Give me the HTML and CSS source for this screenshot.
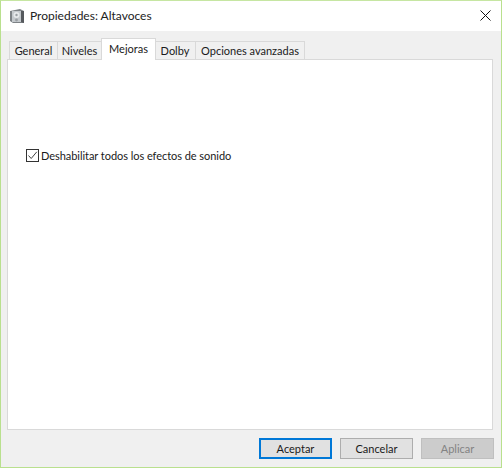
FILE: index.html
```html
<!DOCTYPE html>
<html>
<head>
    <meta charset="UTF-8">
    <title>Propiedades: Altavoces</title>
    <link rel="stylesheet" href="styles.css">
</head>
<body>
    <div class="window">
        <div class="titlebar">
            <svg class="app-icon" width="16" height="16" viewBox="0 0 16 16">
                <path d="M1 3 L11 1 L15 3 L15 15 L4 15 L1 13 Z" fill="#7d8286"/>
                <path d="M3 3 L12 3 L12 14 L3 14 Z" fill="#c4c9cd"/>
                <circle cx="7.5" cy="7" r="3" fill="#e6e9eb"/>
                <circle cx="7.5" cy="7" r="1.2" fill="#9a9fa3"/>
                <circle cx="7.5" cy="12" r="1.4" fill="#9a9fa3"/>
                <path d="M12 3 L15 3 L15 15 L12 14 Z" fill="#55595d"/>
            </svg>
            <div class="title">Propiedades: Altavoces</div>
            <svg class="close" width="11" height="11" viewBox="0 0 11 11">
                <path d="M0.5 0.5 L10.5 10.5 M10.5 0.5 L0.5 10.5" stroke="#111" stroke-width="1" fill="none"/>
            </svg>
        </div>
        <div class="content">
            <div class="tabs">
                <div class="tab tab-general">General</div>
                <div class="tab tab-niveles">Niveles</div>
                <div class="tab tab-mejoras active">Mejoras</div>
                <div class="tab tab-dolby">Dolby</div>
                <div class="tab tab-opciones">Opciones avanzadas</div>
            </div>
            <div class="panel">
                <label class="check-row">
                    <span class="checkbox">
                        <svg width="11" height="11" viewBox="0 0 11 11">
                            <path d="M1.5 5.5 L4.2 8.5 L9.8 1.8" stroke="#444" stroke-width="1" fill="none"/>
                        </svg>
                    </span>
                    <span class="check-label">Deshabilitar todos los efectos de sonido</span>
                </label>
            </div>
            <div class="buttons">
                <button class="btn btn-default">Aceptar</button>
                <button class="btn">Cancelar</button>
                <button class="btn btn-disabled">Aplicar</button>
            </div>
        </div>
    </div>
</body>
</html>
```

FILE: styles.css
```css
html, body {
    margin: 0;
    padding: 0;
}
body {
    width: 502px;
    height: 468px;
    overflow: hidden;
    font-family: Lato, "Open Sans", sans-serif;
    font-size: 11px;
    color: #1a1a1a;
}
.window {
    box-sizing: border-box;
    width: 502px;
    height: 468px;
    display: flex;
    flex-direction: column;
    border: 1px solid #b9e08e;
    border-top: 1px solid #c6e6a2;
    background-color: #f0f0f0;
}
.titlebar {
    display: flex;
    align-items: center;
    height: 30px;
    background-color: #fff;
    padding-left: 8px;
    flex-shrink: 0;
}
.title {
    margin-left: 5px;
    margin-bottom: 2px;
    font-size: 12px;
    color: #222;
    white-space: nowrap;
}
.close {
    margin-left: auto;
    margin-right: 10px;
    margin-bottom: 2px;
}
.content {
    flex: 1;
    display: flex;
    flex-direction: column;
    padding: 10px 8px 0 6px;
}
.tabs {
    display: flex;
    height: 18px;
    align-items: flex-end;
    padding-left: 2px;
    position: relative;
    z-index: 1;
}
.tab {
    box-sizing: border-box;
    height: 18px;
    line-height: 18px;
    text-align: center;
    white-space: nowrap;
    background-color: #f0f0f0;
    border: 1px solid #d9d9d9;
    border-bottom: none;
    border-left: none;
}
.tab-general {
    width: 49px;
    border-left: 1px solid #d9d9d9;
}
.tab-niveles {
    width: 44px;
}
.tab-mejoras {
    width: 55px;
}
.tab-dolby {
    width: 41px;
}
.tab-opciones {
    width: 109px;
}
.tab.active {
    height: 22px;
    line-height: 20px;
    background-color: #fff;
    border-left: 1px solid #d9d9d9;
    margin-left: -1px;
    margin-bottom: -1px;
    margin-right: -1px;
    position: relative;
}
.panel {
    box-sizing: border-box;
    height: 371px;
    background-color: #fff;
    border: 1px solid #d9d9d9;
    padding: 88px 0 0 18px;
}
.check-row {
    display: flex;
    align-items: center;
    height: 14px;
}
.checkbox {
    box-sizing: border-box;
    display: flex;
    width: 13px;
    height: 13px;
    border: 1px solid #333;
    background-color: #fff;
}
.check-label {
    margin-left: 2px;
    white-space: nowrap;
    letter-spacing: -0.05px;
    color: #1a1a1a;
}
.buttons {
    display: flex;
    justify-content: flex-end;
    gap: 8px;
    margin-top: 8px;
    margin-right: -1px;
}
.btn {
    box-sizing: border-box;
    width: 73px;
    height: 21px;
    padding: 0;
    font-family: inherit;
    font-size: 11px;
    color: #1a1a1a;
    background-color: #e1e1e1;
    border: 1px solid #adadad;
}
.btn-default {
    border: 2px solid #0078d7;
}
.btn-disabled {
    background-color: #cccccc;
    border-color: #bfbfbf;
    color: #838383;
}
```
